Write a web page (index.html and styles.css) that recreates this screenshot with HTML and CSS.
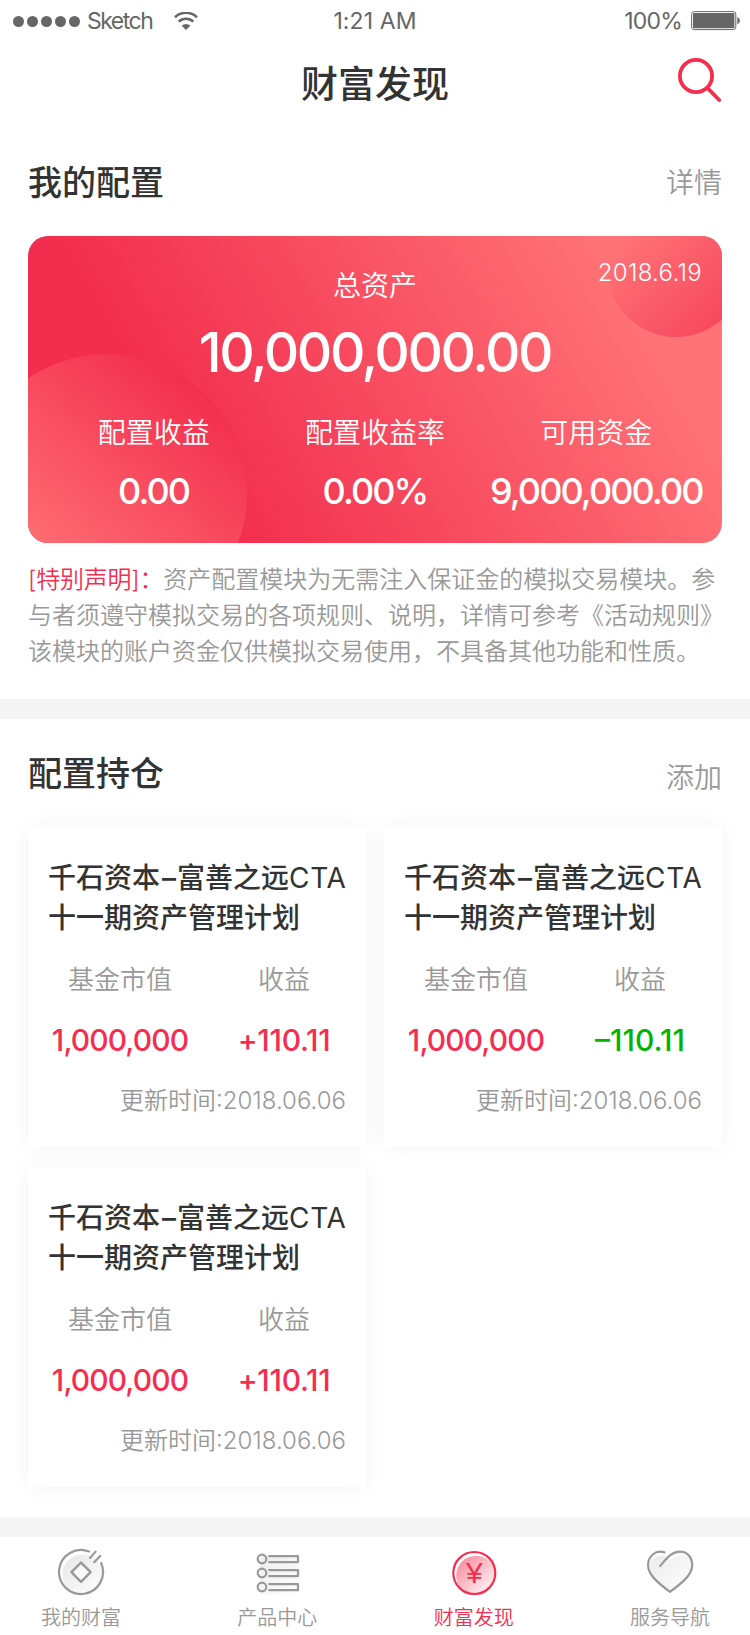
FILE: index.html
```html
<!DOCTYPE html>
<html lang="zh-CN">
<head>
	<title>财富发现</title>
	<meta charset="utf-8">
	<link rel="stylesheet" href="styles.css">
</head>
<body>
<div class="status">
	<div class="status-left">
		<ul class="signal">
			<li></li>
			<li></li>
			<li></li>
			<li></li>
			<li></li>
		</ul>
		<span class="carrier">Sketch</span>
		<svg class="wifi" width="24" height="18" viewBox="0 0 24 18">
			<path d="M1 5.2A16 16 0 0 1 23 5.2" fill="none" stroke="#666" stroke-width="2.6"/>
			<path d="M4.7 9.6A10.6 10.6 0 0 1 19.3 9.6" fill="none" stroke="#666" stroke-width="2.6"/>
			<path d="M7.6 13.6Q12 10.2 16.4 13.6L12 18Z" fill="#666"/>
		</svg>
	</div>
	<span class="time">1:21 AM</span>
	<div class="status-right">
		<span class="percent">100%</span>
		<svg class="battery" width="50" height="20" viewBox="0 0 50 20">
			<rect x="0.6" y="0.6" width="44.2" height="18" rx="2.6" fill="#fff" stroke="#666" stroke-width="1"/>
			<rect x="2" y="2" width="41.4" height="15.2" rx="1" fill="#666"/>
			<path d="M46.3 6Q49 7 49 9.6T46.3 13.2Z" fill="#666"/>
		</svg>
	</div>
</div>

<div class="header">
	<h1>财富发现</h1>
	<svg class="search" width="46" height="46" viewBox="0 0 46 46">
		<circle cx="20" cy="20" r="16.1" fill="none" stroke="#f52e50" stroke-width="3.8"/>
		<path d="M31.6 32.2L43.2 44" fill="none" stroke="#f52e50" stroke-width="3.8" stroke-linecap="round"/>
	</svg>
</div>

<div class="section mine">
	<div class="section-head">
		<h2>我的配置</h2>
		<a class="more">详情</a>
	</div>
	<div class="asset">
		<div class="asset-top">
			<span class="asset-label">总资产</span>
			<span class="asset-date">2018.6.19</span>
		</div>
		<div class="asset-total">10,000,000.00</div>
		<ul class="asset-list">
			<li><span>配置收益</span><b>0.00</b></li>
			<li><span>配置收益率</span><b>0.00%</b></li>
			<li><span>可用资金</span><b>9,000,000.00</b></li>
		</ul>
	</div>
	<p class="notice"><em>[特别声明]：</em>资产配置模块为无需注入保证金的模拟交易模块。参<br>与者须遵守模拟交易的各项规则、说明，详情可参考《活动规则》<br>该模块的账户资金仅供模拟交易使用，不具备其他功能和性质。</p>
</div>

<div class="section hold">
	<div class="section-head">
		<h2>配置持仓</h2>
		<a class="more add">添加</a>
	</div>
	<div class="cards">
		<div class="card">
			<h3>千石资本<i>–</i>富善之远<span>CTA</span><br>十一期资产管理计划</h3>
			<ul class="card-data">
				<li><span>基金市值</span><b>1,000,000</b></li>
				<li><span>收益</span><b class="up">+110.11</b></li>
			</ul>
			<p class="update">更新时间:2018.06.06</p>
		</div>
		<div class="card">
			<h3>千石资本<i>–</i>富善之远<span>CTA</span><br>十一期资产管理计划</h3>
			<ul class="card-data">
				<li><span>基金市值</span><b>1,000,000</b></li>
				<li><span>收益</span><b class="down">–110.11</b></li>
			</ul>
			<p class="update">更新时间:2018.06.06</p>
		</div>
		<div class="card">
			<h3>千石资本<i>–</i>富善之远<span>CTA</span><br>十一期资产管理计划</h3>
			<ul class="card-data">
				<li><span>基金市值</span><b>1,000,000</b></li>
				<li><span>收益</span><b class="up">+110.11</b></li>
			</ul>
			<p class="update">更新时间:2018.06.06</p>
		</div>
	</div>
</div>

<ul class="tabbar">
	<li>
		<svg width="50" height="50" viewBox="0 0 50 50">
			<defs>
				<linearGradient id="gray" x1="0" y1="0" x2="1" y2="1">
					<stop offset="0" stop-color="#e6e6e6"/>
					<stop offset="1" stop-color="#fff"/>
				</linearGradient>
			</defs>
			<circle cx="26.5" cy="27.5" r="20" fill="url(#gray)"/>
			<path d="M33 4.5A22 22 0 1 0 45.2 16.2" fill="none" stroke="#999" stroke-width="2.2" stroke-linecap="round"/>
			<path d="M34 11L39.6 4.6M38.2 15.3L44.2 9" stroke="#999" stroke-width="2.2" stroke-linecap="round"/>
			<path d="M25 15.6L34.6 25.2L25 34.8L15.4 25.2Z" fill="#fff" fill-opacity="0.5" stroke="#999" stroke-width="2.4" stroke-linejoin="round"/>
		</svg>
		<span>我的财富</span>
	</li>
	<li>
		<svg width="50" height="50" viewBox="0 0 50 50">
			<rect x="8" y="9" width="40" height="39" rx="4" fill="url(#gray)" opacity="0.7"/>
			<g fill="none" stroke="#999" stroke-width="2.2" stroke-linejoin="round" stroke-linecap="round">
				<circle cx="10" cy="12" r="4.3"/>
				<circle cx="10" cy="26" r="4.3"/>
				<circle cx="10" cy="40" r="4.3"/>
				<path d="M17.2 9.1H46V15.1H17.2M17.2 23.1H46V29.1H17.2M17.2 37.1H46V43.1H17.2"/>
			</g>
		</svg>
		<span>产品中心</span>
	</li>
	<li class="on">
		<svg width="50" height="50" viewBox="0 0 50 50">
			<defs>
				<linearGradient id="pink" x1="0" y1="0.1" x2="0.9" y2="1">
					<stop offset="0" stop-color="#f98598"/>
					<stop offset="1" stop-color="#fff"/>
				</linearGradient>
			</defs>
			<circle cx="27" cy="28.5" r="19.8" fill="url(#pink)"/>
			<circle cx="25.3" cy="26" r="21" fill="none" stroke="#f52e50" stroke-width="2.2"/>
			<text class="yen" x="25.3" y="36.3" text-anchor="middle" fill="#f52e50">¥</text>
		</svg>
		<span>财富发现</span>
	</li>
	<li>
		<svg width="50" height="50" viewBox="0 0 50 50">
			<path d="M25 46C17 40 5 29 5 19C5 10 18 4 25 13C33 5 47 7 47 18C47 29 33 39 25 46Z" fill="url(#gray)" opacity="0.8"/>
			<path d="M19.5 5.4C10 2.6 3.1 9.5 3.1 18.2C3.1 28.5 15 37.5 25 44.8C35 37.5 47.2 28.5 47.2 18.2C47.2 10 42 4.7 34.8 4.7C26.5 4.7 21.5 11.5 15.2 19" fill="none" stroke="#999" stroke-width="2.2" stroke-linecap="round" stroke-linejoin="round"/>
		</svg>
		<span>服务导航</span>
	</li>
</ul>
</body>
</html>
```
FILE: styles.css
```css
*{
	margin: 0;
	padding: 0;
	box-sizing: border-box;
}
body{
	width: 750px;
	background-color: #fff;
	color: #333;
	font-family: Inter, "Noto Sans CJK SC", sans-serif;
}
li{
	list-style: none;
}
em,i{
	font-style: normal;
}
svg{
	display: block;
	flex: none;
}

/* 状态栏 */
.status{
	height: 40px;
	padding: 2px 9px 0;
	display: grid;
	grid-template-columns: 1fr auto 1fr;
	align-items: center;
	color: #666;
	font-size: 23px;
	line-height: 38px;
}
.status-left,.status-right{
	display: flex;
	align-items: center;
}
.status-right{
	justify-content: flex-end;
}
.signal{
	margin-left: 4px;
	display: flex;
	gap: 3px;
}
.signal li{
	width: 11px;
	height: 11px;
	border-radius: 50%;
	background-color: #666;
}
.carrier{
	margin: 0 22px 0 7px;
	letter-spacing: -1.5px;
}
.time{
	letter-spacing: 0.1px;
}
.percent{
	margin-right: 9px;
	letter-spacing: -0.8px;
}

/* 标题 */
.header{
	height: 88px;
	padding: 16px 28px 0;
	display: grid;
	grid-template-columns: 1fr auto 1fr;
}
.header h1{
	grid-column: 2;
	font-size: 37px;
	font-weight: 500;
	line-height: 58px;
}
.search{
	justify-self: end;
}

.section{
	padding: 0 28px;
	border-bottom: 20px solid #f5f5f5;
}
.mine{
	height: 591px;
}
.hold{
	height: 818px;
}
.section-head{
	height: 108px;
	display: flex;
	justify-content: space-between;
	align-items: center;
}
.section-head h2{
	padding-bottom: 4px;
	font-size: 34px;
	font-weight: 500;
}
.more{
	padding-bottom: 2px;
	color: #999;
	font-size: 28px;
	font-weight: 350;
}
.add{
	padding: 6px 0 0;
}

/* 总资产 */
.asset{
	height: 307px;
	position: relative;
	overflow: hidden;
	border-radius: 20px;
	color: #fff;
	background-image: linear-gradient(60deg, #f22d4e 23%, #ff7376 86%);
}
.asset:before,.asset:after{
	content: "";
	position: absolute;
	border-radius: 50%;
}
.asset:before{
	width: 280px;
	height: 280px;
	left: -61px;
	top: 118px;
	background-image: linear-gradient(40deg, #ff7074 25%, #f22d4e 87%);
}
.asset:after{
	width: 138px;
	height: 138px;
	left: 579px;
	top: -37px;
	background-image: linear-gradient(135deg, #ff7376 20%, #f5405a 98%);
}
.asset-top,.asset-total,.asset-list{
	position: relative;
	z-index: 1;
}
.asset-top{
	height: 83px;
	padding: 17px 20px 0;
	display: grid;
	grid-template-columns: 1fr auto 1fr;
	align-items: start;
}
.asset-label{
	grid-column: 2;
	padding-top: 13px;
	font-size: 28px;
	font-weight: 350;
	line-height: 40px;
}
.asset-date{
	justify-self: end;
	font-size: 24px;
	font-weight: 300;
	line-height: 40px;
	letter-spacing: 0.3px;
}
.asset-total{
	font-size: 55px;
	font-weight: 500;
	line-height: 66px;
	letter-spacing: -2.4px;
	text-align: center;
}
.asset-list{
	padding: 28px 15px 0;
	display: flex;
}
.asset-list li{
	flex: 1;
	min-width: 0;
	text-align: center;
}
.asset-list span{
	display: block;
	font-size: 28px;
	font-weight: 350;
	line-height: 40px;
}
.asset-list b{
	display: block;
	padding-top: 14px;
	font-size: 36px;
	font-weight: 500;
	line-height: 48px;
	letter-spacing: -1.9px;
	white-space: nowrap;
}

.notice{
	padding-top: 19px;
	color: #999;
	font-size: 24px;
	font-weight: 350;
	line-height: 36px;
	white-space: nowrap;
}
.notice em{
	color: #f52e50;
	letter-spacing: -0.2px;
}

/* 持仓卡片 */
.cards{
	display: grid;
	grid-template-columns: 338px 338px;
	gap: 20px 18px;
}
.card{
	height: 320px;
	padding: 31px 0 0 10px;
	background-color: #fff;
	box-shadow: 0 0 20px rgba(0,0,0,0.05);
}
.card h3{
	padding-left: 10px;
	font-size: 28px;
	font-weight: 500;
	line-height: 40px;
	white-space: nowrap;
}
.card h3 i{
	padding: 0 1px 0 2px;
}
.card h3 span{
	font-weight: 400;
	letter-spacing: 0.7px;
}
.card-data{
	padding-top: 22px;
	display: flex;
}
.card-data li{
	width: 50%;
	text-align: center;
}
.card-data span{
	display: block;
	color: #999;
	font-size: 26px;
	font-weight: 350;
	line-height: 40px;
}
.card-data b{
	display: block;
	padding-top: 20px;
	color: #f52e50;
	font-size: 30px;
	font-weight: 500;
	line-height: 40px;
	letter-spacing: -0.9px;
}
.card-data .up{
	letter-spacing: -0.3px;
}
.card-data .down{
	color: #00b400;
	letter-spacing: 0;
}
.update{
	padding: 21px 20px 0 0;
	color: #999;
	font-size: 24px;
	font-weight: 350;
	line-height: 40px;
	text-align: right;
}

/* 底部导航 */
.tabbar{
	height: 98px;
	padding: 10px 40px 0 41px;
	display: flex;
	justify-content: space-between;
}
.tabbar li{
	width: 80px;
	display: flex;
	flex-direction: column;
	align-items: center;
	gap: 4px;
	color: #999;
	font-size: 20px;
	line-height: 34px;
	font-weight: 350;
}
.tabbar .on{
	color: #f52e50;
}
.yen{
	font: 30px "Liberation Sans", sans-serif;
}
```
